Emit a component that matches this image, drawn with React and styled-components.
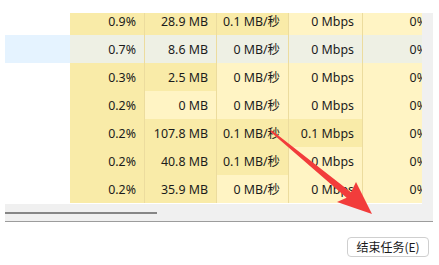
import React from 'react'
import styled, { createGlobalStyle } from 'styled-components'

const GlobalStyle = createGlobalStyle`
  html, body {
    margin: 0;
    padding: 0;
    background: #ffffff;
  }
  body {
    font-family: "Noto Sans", "Noto Sans CJK SC", sans-serif;
    color: #1b1b1b;
  }
`

const HEAT = ['#fff4c4', '#f9eba8']

const rows = [
  { cells: ['0.9%', '28.9 MB', '0.1 MB/秒', '0 Mbps', '0%'], heat: [1, 1, 1, 0, 0] },
  { cells: ['0.7%', '8.6 MB', '0 MB/秒', '0 Mbps', '0%'], heat: [1, 1, 0, 0, 0], hover: true },
  { cells: ['0.3%', '2.5 MB', '0 MB/秒', '0 Mbps', '0%'], heat: [1, 1, 0, 0, 0] },
  { cells: ['0.2%', '0 MB', '0 MB/秒', '0 Mbps', '0%'], heat: [1, 0, 0, 0, 0] },
  { cells: ['0.2%', '107.8 MB', '0.1 MB/秒', '0.1 Mbps', '0%'], heat: [1, 1, 1, 1, 0] },
  { cells: ['0.2%', '40.8 MB', '0.1 MB/秒', '0 Mbps', '0%'], heat: [1, 1, 1, 0, 0] },
  { cells: ['0.2%', '35.9 MB', '0 MB/秒', '0 Mbps', '0%'], heat: [1, 1, 0, 0, 0] },
]

const Page = styled.div`
  position: relative;
  width: 439px;
  height: 265px;
  overflow: hidden;
  padding-top: 13px;
  box-sizing: border-box;
`

const Frame = styled.div`
  margin-left: 5px;
  width: 428px;
`

const Body = styled.div`
  display: flex;
  height: 191px;
`

const Viewport = styled.div`
  width: 417px;
  height: 100%;
  overflow: hidden;
`

const List = styled.div`
  margin-top: -6px;
`

const Row = styled.div`
  display: grid;
  grid-template-columns: 65px 75px 72px 72px 74px 72px;
  height: 28px;
  width: 430px;
`

const NameCell = styled.div`
  background: ${p => (p.$hover ? '#e5f3ff' : 'transparent')};
`

const Cell = styled.div`
  display: flex;
  align-items: center;
  justify-content: flex-end;
  box-sizing: border-box;
  padding-right: 8px;
  font-size: 12.4px;
  white-space: nowrap;
  background: ${p => (p.$hover ? '#eef0e4' : HEAT[p.$heat])};
  border-right: ${p => (p.$last ? 'none' : '1px solid #ecdc9e')};
`

const VScroll = styled.div`
  width: 11px;
  background: #f0f0f0;
`

const HScroll = styled.div`
  display: flex;
  align-items: center;
  height: 17px;
  background: #f0f0f0;
  border-bottom: 1px solid #9c9c9c;
`

const Thumb = styled.div`
  width: 152px;
  height: 2px;
  background: #868686;
`

const Footer = styled.div`
  display: flex;
  justify-content: flex-end;
  padding: 15px 10px 0 0;
`

const Button = styled.button`
  height: 20px;
  width: 82px;
  padding: 0;
  background: #ffffff;
  border: 1px solid #cfcfcf;
  border-radius: 4px;
  font-family: "Noto Sans CJK SC", sans-serif;
  font-size: 12px;
  color: #1b1b1b;
  line-height: 18px;
`

const Annotation = styled.svg`
  position: absolute;
  left: 0;
  top: 0;
  pointer-events: none;
`

// red pointer drawn over the table
const Arrow = () => (
  <Annotation width="439" height="265" viewBox="0 0 439 265">
    <polygon
      fill="#f23c3b"
      points="271.6,130.2 351,192.3 356,182 372,214 337,202 346.6,197.7 270.4,131.8"
    />
  </Annotation>
)

export default function App() {
  return (
    <Page>
      <GlobalStyle />
      <Frame>
        <Body>
          <Viewport>
            <List>
              {rows.map((r, i) => (
                <Row key={i}>
                  <NameCell $hover={r.hover} />
                  {r.cells.map((c, j) => (
                    <Cell key={j} $heat={r.heat[j]} $hover={r.hover} $last={j === r.cells.length - 1}>
                      {c}
                    </Cell>
                  ))}
                </Row>
              ))}
            </List>
          </Viewport>
          <VScroll />
        </Body>
        <HScroll>
          <Thumb />
        </HScroll>
      </Frame>
      <Footer>
        <Button>结束任务(E)</Button>
      </Footer>
      <Arrow />
    </Page>
  )
}
